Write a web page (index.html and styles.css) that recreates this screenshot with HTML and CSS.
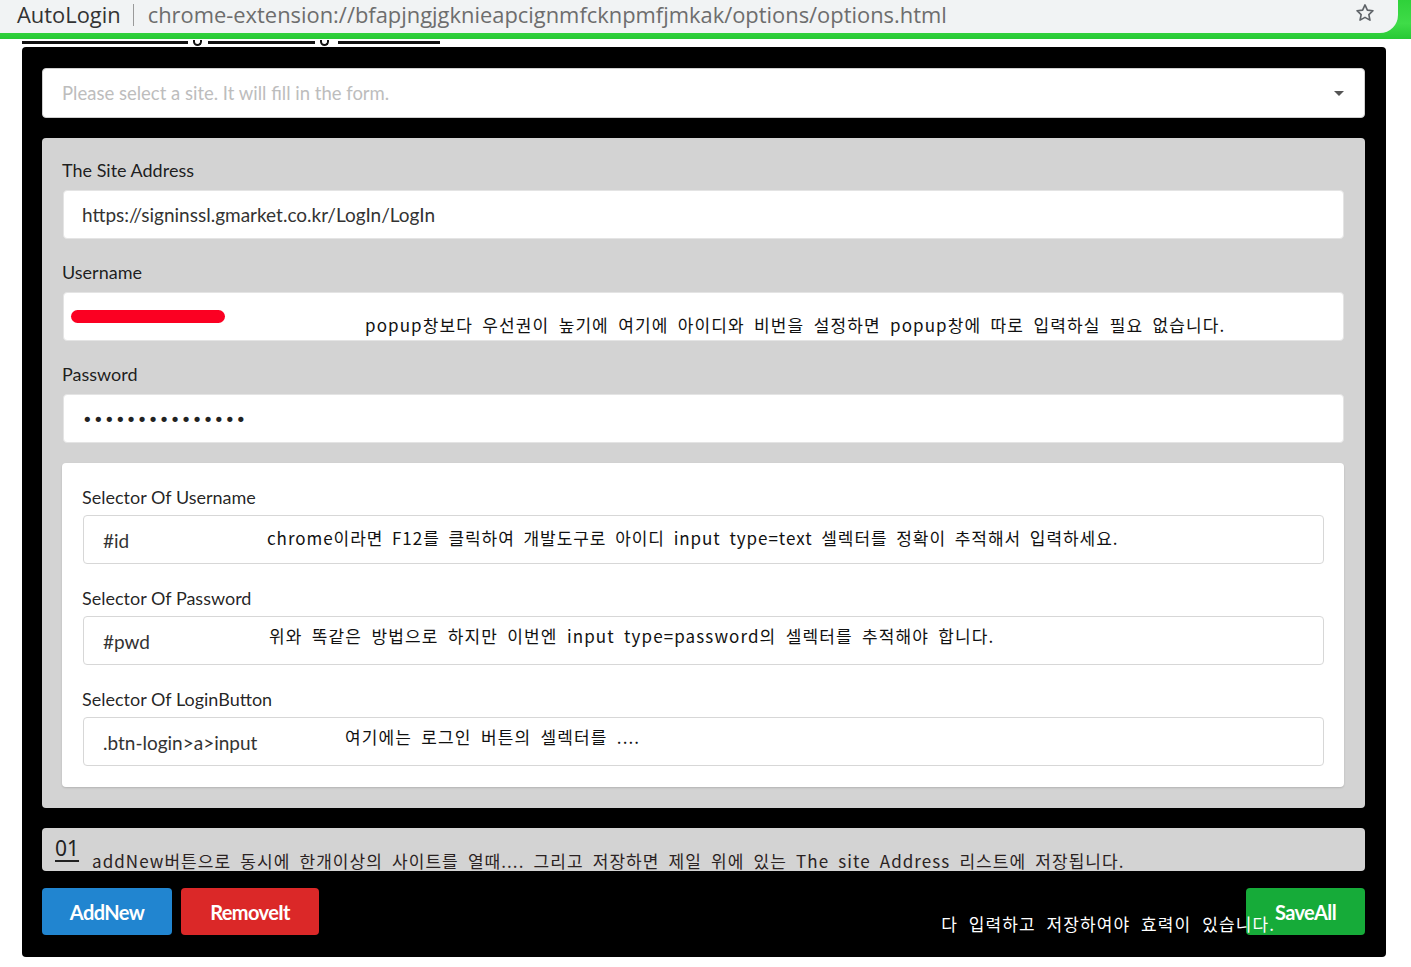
FILE: index.html
```html
<!DOCTYPE html>
<html lang="ko">
<head>
<meta charset="utf-8">
<title>AutoLogin</title>
<link rel="stylesheet" href="styles.css">
</head>
<body>
<header class="chrome">
  <div class="omnibox">
    <span class="site">AutoLogin</span>
    <span class="sep"></span>
    <span class="url">chrome-extension://bfapjngjgknieapcignmfcknpmfjmkak/options/options.html</span>
    <svg class="star" width="22" height="22" viewBox="0 0 24 24"><path d="M12 3.2l2.6 5.6 6.1.7-4.5 4.2 1.2 6.1L12 16.8 6.6 19.8l1.2-6.1-4.5-4.2 6.1-.7z" fill="none" stroke="#5f6368" stroke-width="1.8" stroke-linejoin="round"/></svg>
  </div>
</header>
<div class="remnant">
  <span class="rline w1"></span><span class="rdot"></span><span class="rline w2"></span><span class="rdot rdot2"></span><span class="rline w3"></span>
</div>
<main class="panel">
  <div class="select">
    <span class="placeholder">Please select a site. It will fill in the form.</span>
    <span class="caret"></span>
  </div>

  <section class="form">
    <div class="field">
      <label class="label">The Site Address</label>
      <div class="input">https://signinssl.gmarket.co.kr/LogIn/LogIn</div>
    </div>
    <div class="field">
      <label class="label">Username</label>
      <div class="input">
        <span class="redact"></span>
        <span class="hint hint-user">popup창보다 우선권이 높기에 여기에 아이디와 비번을 설정하면 popup창에 따로 입력하실 필요 없습니다.</span>
      </div>
    </div>
    <div class="field field-last">
      <label class="label">Password</label>
      <div class="input"><span class="dots">•••••••••••••••</span></div>
    </div>

    <div class="selectors">
      <div class="field">
        <label class="label">Selector Of Username</label>
        <div class="input bordered">
          <span class="val val-id">#id</span>
          <span class="hint hint-up">chrome이라면 F12를 클릭하여 개발도구로 아이디 input type=text 셀렉터를 정확이 추적해서 입력하세요.</span>
        </div>
      </div>
      <div class="field">
        <label class="label">Selector Of Password</label>
        <div class="input bordered">
          <span class="val val-pwd">#pwd</span>
          <span class="hint hint-up2">위와 똑같은 방법으로 하지만 이번엔 input type=password의 셀렉터를 추적해야 합니다.</span>
        </div>
      </div>
      <div class="field">
        <label class="label">Selector Of LoginButton</label>
        <div class="input bordered">
          <span class="val val-btn">.btn-login&gt;a&gt;input</span>
          <span class="hint hint-up2">여기에는 로그인 버튼의 셀렉터를 ....</span>
        </div>
      </div>
    </div>
  </section>

  <div class="note">
    <span class="num">01</span>
    <span class="note-text">addNew버튼으로 동시에 한개이상의 사이트를 열때.... 그리고 저장하면 제일 위에 있는 The site Address 리스트에 저장됩니다.</span>
  </div>

  <div class="actions">
    <button class="btn blue">AddNew</button>
    <button class="btn red">RemoveIt</button>
    <span class="save-hint">다 입력하고 저장하여야 효력이 있습니다.</span>
    <button class="btn green">SaveAll</button>
  </div>
</main>
</body>
</html>
```

FILE: styles.css
```css
* { box-sizing: border-box; }
html, body { margin: 0; padding: 0; background: #fff; }
body { font-family: "Lato", "Noto Sans CJK KR", sans-serif; }

.chrome {
  height: 39px;
  background: linear-gradient(180deg, #2fd13a 0%, #3fdc48 60%, #27c934 100%);
}
.omnibox {
  height: 33px;
  width: 1398px;
  background: #f1f3f4;
  border-bottom-right-radius: 18px;
  display: flex;
  align-items: flex-start;
  padding-left: 17px;
  font-family: "Open Sans", "Noto Sans", sans-serif;
  font-size: 21.9px;
  line-height: 30px;
}
.site { color: #333; }
.sep { width: 1px; height: 22px; background: #9a9a9a; margin: 4px 14px 0 12px; }
.url { color: #6d6d6d; }
.star { margin-left: auto; margin-right: 22px; margin-top: 2px; }

.remnant {
  height: 8px;
  display: flex;
  align-items: flex-start;
  padding-left: 22px;
  padding-top: 1px;
}
.rline { height: 3px; background: #111; display: block; margin-top: 1px; }
.w1 { width: 166px; }
.w2 { width: 107px; }
.w3 { width: 102px; }
.rdot { width: 9px; height: 6px; border: 2px solid #111; border-top: none; border-radius: 0 0 5px 5px; margin: 0 6px 0 5px; }
.rdot2 { margin: 0 9px 0 5px; }

.panel {
  background: #000;
  margin: 0 25px 11px 22px;
  border-radius: 4px;
  padding: 21px 21px 21px 20px;
}

.select {
  height: 50px;
  background: #fff;
  border: 1px solid #cfcfcf;
  border-radius: 4px;
  display: flex;
  align-items: center;
  padding: 0 20px 0 19px;
  font-size: 18.5px;
}
.placeholder { color: #bdbdbd; }
.caret {
  margin-left: auto;
  width: 0; height: 0;
  border-left: 5px solid transparent;
  border-right: 5px solid transparent;
  border-top: 5px solid #555;
}

.form {
  margin-top: 20px;
  background: #d3d3d3;
  border-radius: 4px;
  padding: 21px 21px 21px 20px;
}
.field { margin-bottom: 22px; }
.field-last { margin-bottom: 20px; }
.label {
  display: block;
  font-size: 18px;
  line-height: 22px;
  color: rgba(0,0,0,.87);
  margin-bottom: 9px;
}
.form > .field .input { margin-left: 1px; padding-left: 18px; }
.input {
  height: 49px;
  background: #fff;
  border-radius: 4px;
  border: 1px solid #e4e4e4;
  display: flex;
  align-items: center;
  padding-left: 17px;
  font-size: 19px;
  color: #333;
  white-space: nowrap;
}
.dots { font-family: "DejaVu Sans", sans-serif; font-size: 18px; letter-spacing: 0.35px; color: #222; margin-top: 1px; }

.redact {
  width: 154px; height: 13px;
  background: #fb0022;
  border-radius: 7px;
  margin-left: -11px;
}
.hint {
  font-family: "Noto Sans CJK KR", sans-serif;
  font-size: 17px;
  color: #111;
  letter-spacing: 1.1px;
  word-spacing: 3.5px;
}
.hint-user { margin-left: 140px; margin-top: 15px; }
.hint-up { letter-spacing: 0.95px; word-spacing: 3px; }

.selectors {
  background: #fff;
  border-radius: 4px;
  box-shadow: 0 1px 2px rgba(0,0,0,.15);
  padding: 23px 20px 21px 20px;
}
.selectors .field { margin-bottom: 23px; }
.selectors .field:last-child { margin-bottom: 0; }
.selectors .label { margin-bottom: 7px; }
.bordered { border: 1px solid #d7d7d7; padding-left: 19px; margin-left: 1px; }
.val { flex: none; margin-top: 2px; }
.val-id { width: 164px; }
.val-pwd { width: 166px; }
.val-btn { width: 242px; }
.hint-up { margin-top: -4px; }
.hint-up2 { margin-top: -10px; }

.note {
  margin-top: 20px;
  height: 43px;
  background: #d3d3d3;
  border-radius: 4px;
  display: flex;
  align-items: flex-end;
  padding-left: 13px;
  white-space: nowrap;
}
.num {
  font-family: "Noto Sans", sans-serif;
  font-size: 21px;
  line-height: 22px;
  color: #222;
  text-decoration: underline;
  text-underline-offset: 4px;
  text-decoration-thickness: 2px;
  margin-bottom: 12px;
}
.note-text {
  font-family: "Noto Sans CJK KR", sans-serif;
  font-size: 17px;
  line-height: 17px;
  color: #2a2222;
  letter-spacing: 1.05px;
  word-spacing: 3.3px;
  margin-left: 13px;
  margin-bottom: 2px;
}

.actions {
  margin-top: 16px;
  display: flex;
  align-items: center;
  gap: 9px;
}
.btn {
  height: 47px;
  border: none;
  border-radius: 4px;
  color: #fff;
  font-family: "Lato", sans-serif;
  font-weight: 700;
  font-size: 20px;
  padding: 0;
  letter-spacing: -0.6px;
}
.blue { background: #2185d0; width: 130px; }
.red { background: #db2828; width: 138px; }
.green { background: #16ab39; width: 119px; }
.save-hint {
  margin-left: auto;
  margin-right: -38px;
  margin-top: 24px;
  position: relative;
  z-index: 1;
  color: #fff;
  font-family: "Noto Sans CJK KR", sans-serif;
  font-size: 17px;
  letter-spacing: 1.1px;
  word-spacing: 5px;
  white-space: nowrap;
}
```
